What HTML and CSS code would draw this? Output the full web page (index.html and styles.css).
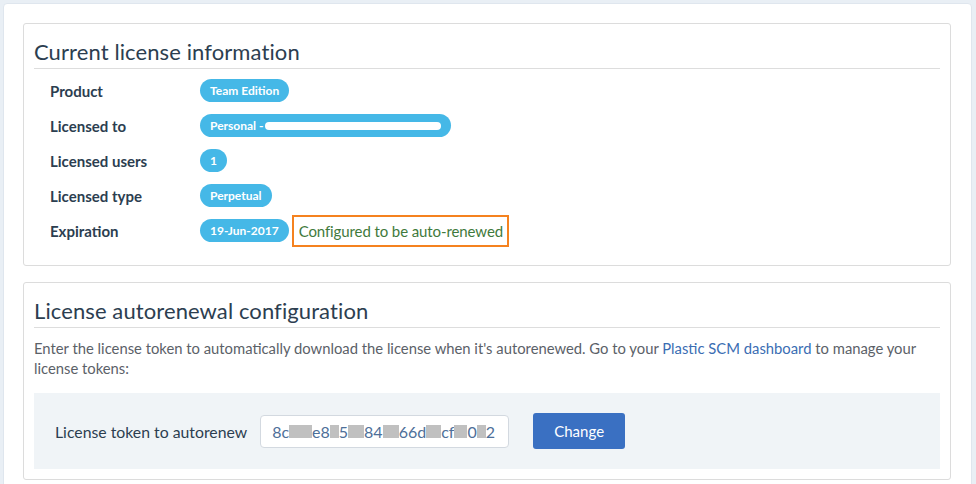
FILE: index.html
```html
<!DOCTYPE html>
<html>
<head>
<meta charset="utf-8">
<link rel="stylesheet" href="styles.css">
</head>
<body>
<div class="outer">
  <section class="card">
    <h2 class="card-title">Current license information</h2>
    <div class="rows">
      <div class="row"><div class="label">Product</div><span class="badge">Team Edition</span></div>
      <div class="row"><div class="label">Licensed to</div><span class="badge">Personal - <span class="redact-white"></span></span></div>
      <div class="row"><div class="label">Licensed users</div><span class="badge">1</span></div>
      <div class="row"><div class="label">Licensed type</div><span class="badge">Perpetual</span></div>
      <div class="row"><div class="label">Expiration</div><span class="badge">19-Jun-2017</span><span class="renew">Configured to be auto-renewed</span></div>
    </div>
  </section>
  <section class="card card2">
    <h2 class="card-title">License autorenewal configuration</h2>
    <p class="desc">Enter the license token to automatically download the license when it's autorenewed. Go to your <a class="link" href="#">Plastic SCM dashboard</a> to manage your license tokens:</p>
    <div class="form">
      <label class="form-label">License token to autorenew</label>
      <div class="input">8c<span class="gr w23"></span>e8<span class="gr w9"></span>5<span class="gr w16"></span>84<span class="gr w16"></span>66d<span class="gr w15"></span>cf<span class="gr w13"></span>0<span class="gr w9"></span>2</div>
      <button class="btn">Change</button>
    </div>
  </section>
</div>
</body>
</html>
```

FILE: styles.css
```css
* { box-sizing: border-box; }
html, body { margin: 0; padding: 0; }
body {
  background: #e9eff5;
  font-family: Lato, "Liberation Sans", sans-serif;
  color: #2c3e50;
  height: 484px;
  overflow: hidden;
}
.outer {
  margin: 3px 0 0 3px;
  width: 969px;
  height: 520px;
  background: #fff;
  border: 1px solid #dfe6ee;
  border-radius: 4px;
  padding: 19px 20px 0 19px;
}
.card {
  border: 1px solid #dcdcdc;
  border-radius: 3px;
  padding: 0 10px 17px 10px;
}
.card2 {
  margin-top: 16px;
  padding-bottom: 10px;
}
.card-title {
  margin: 0;
  padding-top: 15px;
  padding-bottom: 3px;
  font-size: 22px;
  letter-spacing: 0.1px;
  font-weight: normal;
  line-height: 26px;
  color: #2c3e50;
  border-bottom: 1px solid #dddddd;
}
.rows { margin-top: 4px; }
.row {
  display: flex;
  align-items: center;
  height: 35px;
}
.label {
  width: 166px;
  padding-left: 16px;
  font-weight: bold;
  font-size: 15px;
  color: #2c3e50;
}
.badge {
  display: inline-flex;
  align-items: center;
  height: 23px;
  padding: 0 10px;
  background: #45b8e7;
  color: #fff;
  font-weight: bold;
  font-size: 12px;
  border-radius: 12px;
  white-space: nowrap;
}
.redact-white {
  display: inline-block;
  width: 176px;
  height: 8px;
  background: #fff;
  border-radius: 4px;
  margin-left: 2px;
}
.renew {
  margin-left: 3px;
  border: 2px solid #f5821f;
  padding: 5px 4px 5px 5px;
  font-size: 15px;
  line-height: 18px;
  letter-spacing: -0.1px;
  color: #3f7a3c;
}
.desc {
  margin: 10px 0 15px 0;
  font-size: 14.8px;
  line-height: 20px;
  color: #5b6168;
}
.link { color: #3a6db3; text-decoration: none; }
.form {
  display: flex;
  align-items: center;
  background: #f0f4f7;
  padding: 20px 21px;
}
.form-label {
  font-size: 15.8px;
  color: #2c3e50;
  margin-right: 13px;
}
.input {
  width: 249px;
  height: 33px;
  border: 1px solid #d3d9e0;
  border-radius: 4px;
  background: #fff;
  padding: 0 11px;
  display: flex;
  align-items: center;
  font-size: 16px;
  color: #4e6f99;
  white-space: nowrap;
}
.gr {
  display: inline-block;
  height: 13px;
  background: #c0c0c0;
}
.w23 { width: 23px; }
.w16 { width: 16px; }
.w15 { width: 15px; }
.w13 { width: 13px; }
.w9 { width: 9px; }
.btn {
  margin-left: 24px;
  width: 92px;
  height: 36px;
  background: #3a70c2;
  border: none;
  border-radius: 3px;
  color: #fff;
  font-family: Lato, "Liberation Sans", sans-serif;
  font-size: 15px;
}
```
